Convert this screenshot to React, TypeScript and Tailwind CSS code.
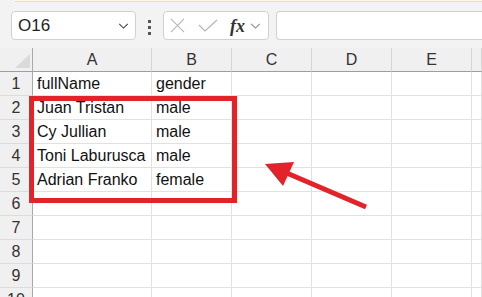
import React from 'react'

const cols = ['A', 'B', 'C', 'D', 'E', '']
const data: string[][] = [
  ['fullName', 'gender'],
  ['Juan Tristan', 'male'],
  ['Cy Jullian', 'male'],
  ['Toni Laburusca', 'male'],
  ['Adrian Franko', 'female'],
]

function Chevron({ className }: { className?: string }) {
  return (
    <svg viewBox="0 0 12 7" className={className} fill="none" stroke="currentColor" strokeWidth="1.2">
      <path d="M1 1l5 5 5-5" />
    </svg>
  )
}

function Toolbar() {
  return (
    <div className="flex h-[46px] items-start pt-[9px] pl-[11px]">
      <div className="flex h-[29px] w-[125px] items-center justify-between rounded-[4px] border border-[#d1d1d1] bg-white pl-[6px] pr-[6px]">
        <span className="text-[17px] text-[#222]">O16</span>
        <Chevron className="h-[6px] w-[11px] text-[#444]" />
      </div>
      <div className="flex w-[27px] flex-col items-center gap-[3px] pt-[9px]">
        <span className="h-[3px] w-[3px] bg-[#555]" />
        <span className="h-[3px] w-[3px] bg-[#555]" />
        <span className="h-[3px] w-[3px] bg-[#555]" />
      </div>
      <div className="flex h-[29px] w-[106px] items-center rounded-[4px] border border-[#d1d1d1] bg-white pl-[6px]">
        <svg viewBox="0 0 16 16" className="h-[15px] w-[15px]" fill="none" stroke="#b4b4b4" strokeWidth="1.1">
          <path d="M1 1l14 14M15 1L1 15" />
        </svg>
        <svg viewBox="0 0 20 13" className="ml-[13px] h-[13px] w-[20px]" fill="none" stroke="#b4b4b4" strokeWidth="1.1">
          <path d="M1 6l6 6L19 1" />
        </svg>
        <span className="ml-[12px] text-[18px] font-bold italic leading-none text-[#333]" style={{ fontFamily: '"Liberation Serif", serif' }}>
          fx
        </span>
        <Chevron className="ml-[5px] h-[6px] w-[11px] text-[#888]" />
      </div>
      <div className="ml-[7px] h-[29px] flex-1 rounded-l-[4px] border border-r-0 border-[#d1d1d1] bg-white" />
    </div>
  )
}

function Sheet() {
  const rows = Array.from({ length: 10 }, (_, i) => i + 1)
  return (
    <div className="grid grid-cols-[33px_119px_80px_80px_80px_80px_1fr] auto-rows-[24px]">
      <div className="relative border-r border-b border-r-[#a9a9a9] border-b-[#9e9e9e] bg-[#f0f0f0]">
        <svg viewBox="0 0 16 14" className="absolute left-[15px] top-[6px] h-[14px] w-[16px]">
          <polygon points="15,0 15,14 0,14" fill="#dadada" />
        </svg>
      </div>
      {cols.map((c, i) => (
        <div key={i} className="flex items-center justify-center border-r border-b border-r-[#d6d6d6] border-b-[#9e9e9e] bg-[#f0f0f0] pt-[1px] text-[16px] text-[#333]">
          {c}
        </div>
      ))}
      {rows.map((r) => (
        <React.Fragment key={r}>
          <div className="flex items-center justify-center border-r border-b border-r-[#a9a9a9] border-b-[#dcdcdc] bg-[#f0f0f0] pt-[1px] text-[16px] text-[#333]">
            {r}
          </div>
          {cols.map((_, ci) => (
            <div key={ci} className="flex items-center overflow-hidden whitespace-nowrap border-r border-b border-[#e1e1e1] bg-white pl-[4px] pt-[1px] text-[16px] text-[#111]">
              {data[r - 1]?.[ci] ?? ''}
            </div>
          ))}
        </React.Fragment>
      ))}
    </div>
  )
}

export default function App() {
  return (
    <div className="relative h-[297px] w-[482px] overflow-hidden bg-[#f3f3f3]" style={{ fontFamily: '"Liberation Sans", Arial, sans-serif' }}>
      <div className="flex h-[2px]">
        <div className="w-[15px]" />
        <div className="flex-1 border-b border-[#e2dfc4] bg-[#fdfae6]" />
      </div>
      <Toolbar />
      <Sheet />

      <div className="absolute left-[29px] top-[96px] h-[107px] w-[208px] border-[5px] border-[#e3232a]" />
      <svg className="absolute left-0 top-0" width="482" height="297" viewBox="0 0 482 297">
        <line x1="366" y1="207" x2="282" y2="171" stroke="#e3232a" strokeWidth="5" />
        <polygon points="265,164 294,162 283,186" fill="#e3232a" />
      </svg>
    </div>
  )
}
